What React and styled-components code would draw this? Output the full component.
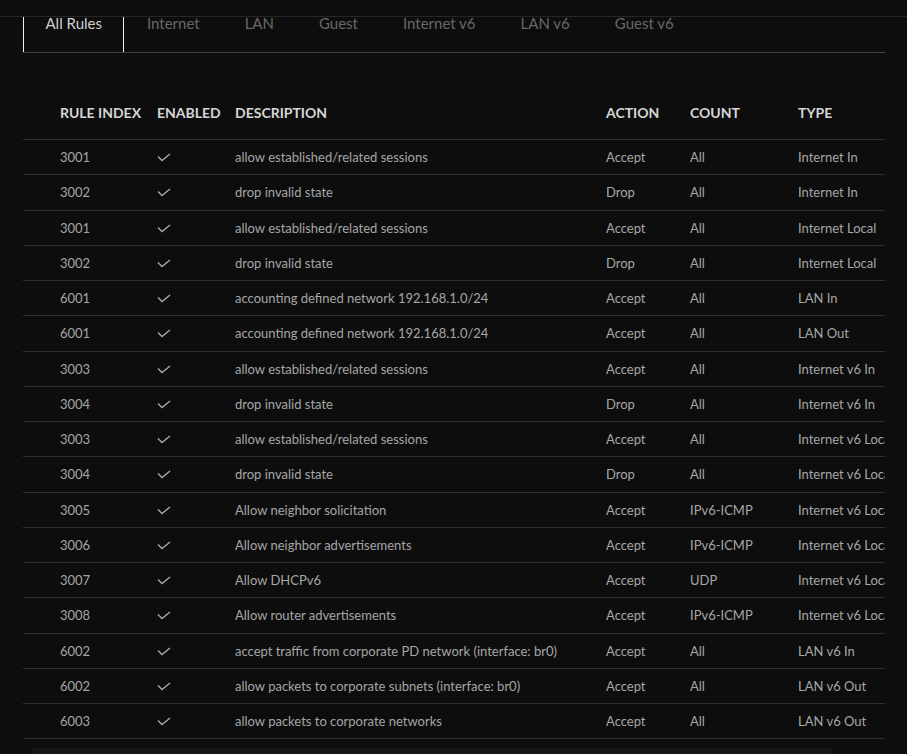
import React from "react";
import styled, { createGlobalStyle } from "styled-components";

const GlobalStyle = createGlobalStyle`
  html, body {
    margin: 0;
    padding: 0;
    background: #0d0d0d;
    height: 754px;
    overflow: hidden;
  }
  body {
    font-family: Lato, "Noto Sans", sans-serif;
  }
`;

const Page = styled.div`
  width: 907px;
  height: 754px;
  background: #0d0d0d;
  overflow: hidden;
`;

const TopBar = styled.div`
  height: 16px;
  border-bottom: 1px solid #262626;
`;

const Content = styled.div`
  padding: 0 22px 0 23px;
`;

const Tabs = styled.div`
  display: flex;
  height: 35px;
  border-bottom: 1px solid #3f3f3f;
`;

const Tab = styled.div`
  padding: 0 21.5px;
  height: 35px;
  box-sizing: border-box;
  font-size: 15px;
  line-height: 13px;
  color: ${(p) => (p.$active ? "#cfcfcf" : "#686868")};
  border-left: 1px solid ${(p) => (p.$active ? "#f2f2f2" : "transparent")};
  border-right: 1px solid ${(p) => (p.$active ? "#f2f2f2" : "transparent")};
  white-space: nowrap;
`;

const TableWrap = styled.div`
  margin-top: 33px;
`;

const Clip = styled.div`
  width: 862px;
  overflow: hidden;
`;

const Grid = styled.div`
  width: 930px;
`;

const Row = styled.div`
  display: grid;
  grid-template-columns: 37px 97px 78px 371px 84px 108px 1fr;
  align-items: center;
  height: ${(p) => (p.$head ? "54px" : "35.25px")};
  box-sizing: border-box;
  border-bottom: 1px solid #2e2e2e;
  white-space: nowrap;
  font-size: ${(p) => (p.$head ? "14px" : "13px")};
  font-weight: ${(p) => (p.$head ? 700 : 400)};
  color: ${(p) => (p.$head ? "#d6d6d6" : "#a6a6a6")};
`;

const Cell = styled.div`
  overflow: hidden;
`;

const Scroll = styled.div`
  margin: 9px 0 0 8px;
  width: 802px;
  height: 9px;
  border-radius: 5px;
  background: #161616;
`;

const Check = () => (
  <svg width="14" height="9" viewBox="0 0 14 9">
    <polyline
      points="1,3.5 5,7.5 13,1"
      fill="none"
      stroke="#a8a8a8"
      strokeWidth="1.4"
    />
  </svg>
);

const tabs = ["All Rules", "Internet", "LAN", "Guest", "Internet v6", "LAN v6", "Guest v6"];

const rules = [
  ["3001", "allow established/related sessions", "Accept", "All", "Internet In"],
  ["3002", "drop invalid state", "Drop", "All", "Internet In"],
  ["3001", "allow established/related sessions", "Accept", "All", "Internet Local"],
  ["3002", "drop invalid state", "Drop", "All", "Internet Local"],
  ["6001", "accounting defined network 192.168.1.0/24", "Accept", "All", "LAN In"],
  ["6001", "accounting defined network 192.168.1.0/24", "Accept", "All", "LAN Out"],
  ["3003", "allow established/related sessions", "Accept", "All", "Internet v6 In"],
  ["3004", "drop invalid state", "Drop", "All", "Internet v6 In"],
  ["3003", "allow established/related sessions", "Accept", "All", "Internet v6 Local"],
  ["3004", "drop invalid state", "Drop", "All", "Internet v6 Local"],
  ["3005", "Allow neighbor solicitation", "Accept", "IPv6-ICMP", "Internet v6 Local"],
  ["3006", "Allow neighbor advertisements", "Accept", "IPv6-ICMP", "Internet v6 Local"],
  ["3007", "Allow DHCPv6", "Accept", "UDP", "Internet v6 Local"],
  ["3008", "Allow router advertisements", "Accept", "IPv6-ICMP", "Internet v6 Local"],
  ["6002", "accept traffic from corporate PD network (interface: br0)", "Accept", "All", "LAN v6 In"],
  ["6002", "allow packets to corporate subnets (interface: br0)", "Accept", "All", "LAN v6 Out"],
  ["6003", "allow packets to corporate networks", "Accept", "All", "LAN v6 Out"],
];

export default function App() {
  return (
    <Page>
      <GlobalStyle />
      <TopBar />
      <Content>
        <Tabs>
          {tabs.map((t, i) => (
            <Tab key={t} $active={i === 0}>
              {t}
            </Tab>
          ))}
        </Tabs>
        <TableWrap>
          <Clip>
            <Grid>
              <Row $head>
                <Cell />
                <Cell>RULE INDEX</Cell>
                <Cell>ENABLED</Cell>
                <Cell>DESCRIPTION</Cell>
                <Cell>ACTION</Cell>
                <Cell>COUNT</Cell>
                <Cell>TYPE</Cell>
              </Row>
              {rules.map((r, i) => (
                <Row key={i}>
                  <Cell />
                  <Cell>{r[0]}</Cell>
                  <Cell>
                    <Check />
                  </Cell>
                  <Cell>{r[1]}</Cell>
                  <Cell>{r[2]}</Cell>
                  <Cell>{r[3]}</Cell>
                  <Cell>{r[4]}</Cell>
                </Row>
              ))}
            </Grid>
          </Clip>
          <Scroll />
        </TableWrap>
      </Content>
    </Page>
  );
}
